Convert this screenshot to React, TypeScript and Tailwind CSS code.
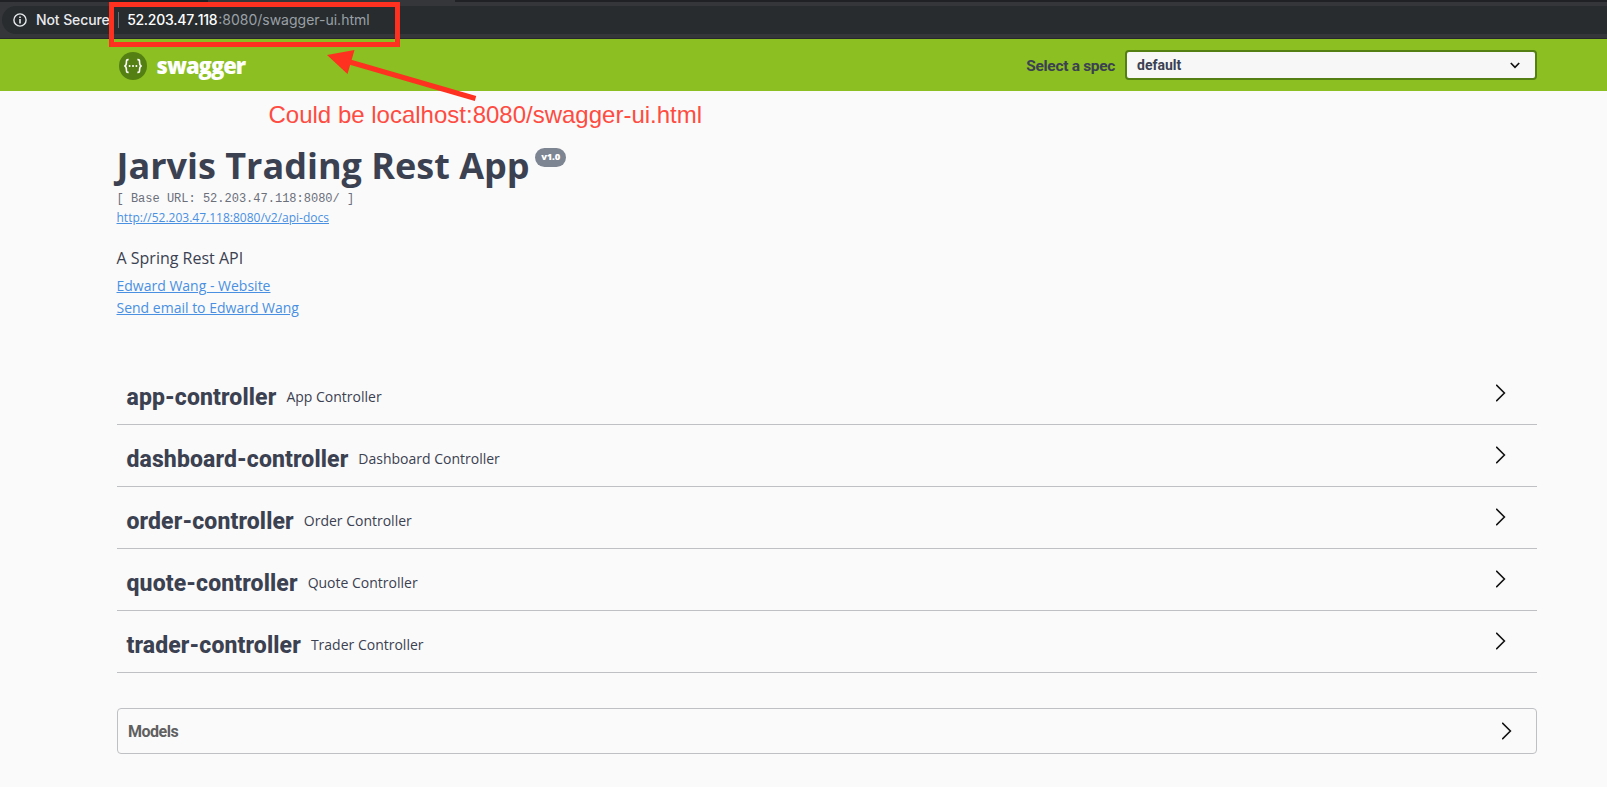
const controllers = [
  { name: "app-controller", description: "App Controller" },
  { name: "dashboard-controller", description: "Dashboard Controller" },
  { name: "order-controller", description: "Order Controller" },
  { name: "quote-controller", description: "Quote Controller" },
  { name: "trader-controller", description: "Trader Controller" },
];

function Chevron() {
  return (
    <svg width="10" height="18" viewBox="0 0 10 18" fill="none" stroke="#111" strokeWidth="1.6">
      <path d="M.2.7 8.4 9 .2 17.3" />
    </svg>
  );
}

function BrowserBar() {
  return (
    <div className="flex h-[39px] flex-col border-b border-[#26282b] bg-[#35363a] font-['Inter',sans-serif] text-[14px]">
      <div className="flex h-[2px] shrink-0 bg-[#202124]">
        <div className="ml-[208px] h-full w-[247px] bg-[#35363a]" />
      </div>
      <div className="mt-1 ml-[2px] flex h-7 items-center rounded-l-full bg-[#282c2f] pl-[11px]">
        <svg width="14" height="14" viewBox="0 0 14 14" fill="none" stroke="#e8eaed" strokeWidth="1.4">
          <circle cx="7" cy="7" r="6.1" />
          <path d="M7 6v4.4M7 3.4v1.5" strokeWidth="1.6" />
        </svg>
        <span className="mb-[2px] ml-[9px] font-medium tracking-[-0.1px] text-[#e8eaed]">Not Secure</span>
        <span className="ml-2 h-4 w-px bg-[#6b6e72]" />
        <span className="mb-[2px] ml-[8.5px] w-[91px] font-medium whitespace-nowrap text-white tracking-[-0.3px] [font-kerning:none]">
          52.203.47.118
        </span>
        <span className="mb-[2px] text-[#9aa0a6]">:8080/swagger-ui.html</span>
      </div>
    </div>
  );
}

function TopBar() {
  return (
    <header className="flex h-[52px] items-center bg-[#8bbf22] pr-[70px] pl-[119px]">
      <svg className="mt-[1px]" width="28" height="28" viewBox="0 0 28 28" fill="none">
        <circle cx="14" cy="14" r="14" fill="#547f12" />
        <g stroke="#fff" strokeWidth="1.6">
          <path d="M9.6 7.6C7.4 7.4 7.4 8.6 7.4 10.4c0 2.2 0 3.2-2 3.6 2 .4 2 1.4 2 3.6 0 1.8 0 3 2.2 2.8" />
          <path d="M18.4 7.6c2.2-.2 2.2 1 2.2 2.8 0 2.2 0 3.2 2 3.6-2 .4-2 1.4-2 3.6 0 1.8 0 3-2.2 2.8" />
        </g>
        <g fill="#fff">
          <circle cx="10.6" cy="14" r="1" />
          <circle cx="14" cy="14" r="1" />
          <circle cx="17.4" cy="14" r="1" />
        </g>
      </svg>
      <span className="mt-[1px] ml-[9.5px] font-['Open_Sans',sans-serif] text-[22px] font-extrabold tracking-[-1px] text-white">
        swagger
      </span>
      <label className="mt-[3px] ml-auto font-['Roboto',sans-serif] text-[15.5px] font-bold tracking-[-0.32px] text-[#3b4151]">
        Select a spec
      </label>
      <div className="ml-[10px] flex h-[30px] w-[412px] items-center justify-between rounded-[4px] border-2 border-[#547f12] bg-[#f7f7f7] pr-[15px] pl-[10px] font-['Roboto',sans-serif] text-[14px] font-bold text-[#3b4151]">
        <span>default</span>
        <svg width="10" height="7" viewBox="0 0 10 7" fill="none" stroke="#111" strokeWidth="1.7">
          <path d="M.8 1 5 5.3 9.2 1" />
        </svg>
      </div>
    </header>
  );
}

function Info() {
  return (
    <section className="-ml-[0.5px] flex flex-col items-start text-[#3b4151]">
      <div className="flex items-start">
        <h1 className="text-[36px] leading-[49px] font-bold">Jarvis Trading Rest App</h1>
        <span className="mt-[7px] ml-[5.5px] flex h-[19px] w-[31px] items-center justify-center rounded-full bg-[#7d8492] text-[9.5px] font-extrabold tracking-[-0.2px] text-white">
          v1.0
        </span>
      </div>
      <p className="h-[18px] font-['Liberation_Mono',monospace] text-[12px] leading-[18px] whitespace-pre text-[#6b6f7a]">
        [ Base URL: 52.203.47.118:8080/ ]
      </p>
      <a className="mt-[1px] text-[12px] leading-[17px] text-[#4990e2] underline">http://52.203.47.118:8080/v2/api-docs</a>
      <p className="mt-[20px] text-[16px] leading-[24px]">A Spring Rest API</p>
      <a className="mt-[5px] text-[14px] leading-[22px] text-[#4990e2] underline">Edward Wang - Website</a>
      <a className="text-[14px] leading-[22px] text-[#4990e2] underline">Send email to Edward Wang</a>
    </section>
  );
}

function Annotations() {
  return (
    <div className="pointer-events-none absolute inset-0">
      <div className="absolute top-[2px] left-[109px] h-[45px] w-[291px] border-[5px] border-[#fe3020]" />
      <svg className="absolute top-[45px] left-[320px]" width="160" height="60" viewBox="320 45 160 60">
        <path d="M475.5 98.5 348 61.5" stroke="#fe3020" strokeWidth="5" />
        <path d="M327 55 354.5 50 347.5 74Z" fill="#fe3020" />
      </svg>
      <span className="absolute top-[101px] left-[268.5px] font-['Liberation_Sans',sans-serif] text-[24px] leading-[28px] whitespace-nowrap text-[#ff4b41]">
        Could be localhost:8080/swagger-ui.html
      </span>
    </div>
  );
}

export default function App() {
  return (
    <div className="relative h-[787px] w-[1607px] overflow-hidden bg-[#fafafa] font-['Open_Sans',sans-serif]">
      <BrowserBar />
      <TopBar />
      <main className="mr-[70px] ml-[117px] pt-[50px]">
        <Info />
        <section className="mt-[44px]">
          {controllers.map(({ name, description }) => (
            <div key={name} className="flex h-[62px] items-center border-b border-[#bfc0c4] pr-[31px] pl-[9.5px] text-[#3b4151]">
              <div className="flex flex-1 items-center pt-[6px]">
                <h3 className="pt-[3px] font-['Roboto',sans-serif] text-[23px] leading-[32px] font-extrabold tracking-[0.12px]">
                  {name}
                </h3>
                <span className="ml-[10px] text-[14px]">{description}</span>
              </div>
              <div className="mb-[2px]">
                <Chevron />
              </div>
            </div>
          ))}
        </section>
        <section className="mt-[35px] flex h-[46px] items-center justify-between rounded-[4px] border border-[#bfc0c4] pr-[24px] pl-[10px]">
          <h4 className="mt-[2px] font-['Roboto',sans-serif] text-[16px] font-bold tracking-[-0.5px] text-[#606060]">
            Models
          </h4>
          <Chevron />
        </section>
      </main>
      <Annotations />
    </div>
  );
}
